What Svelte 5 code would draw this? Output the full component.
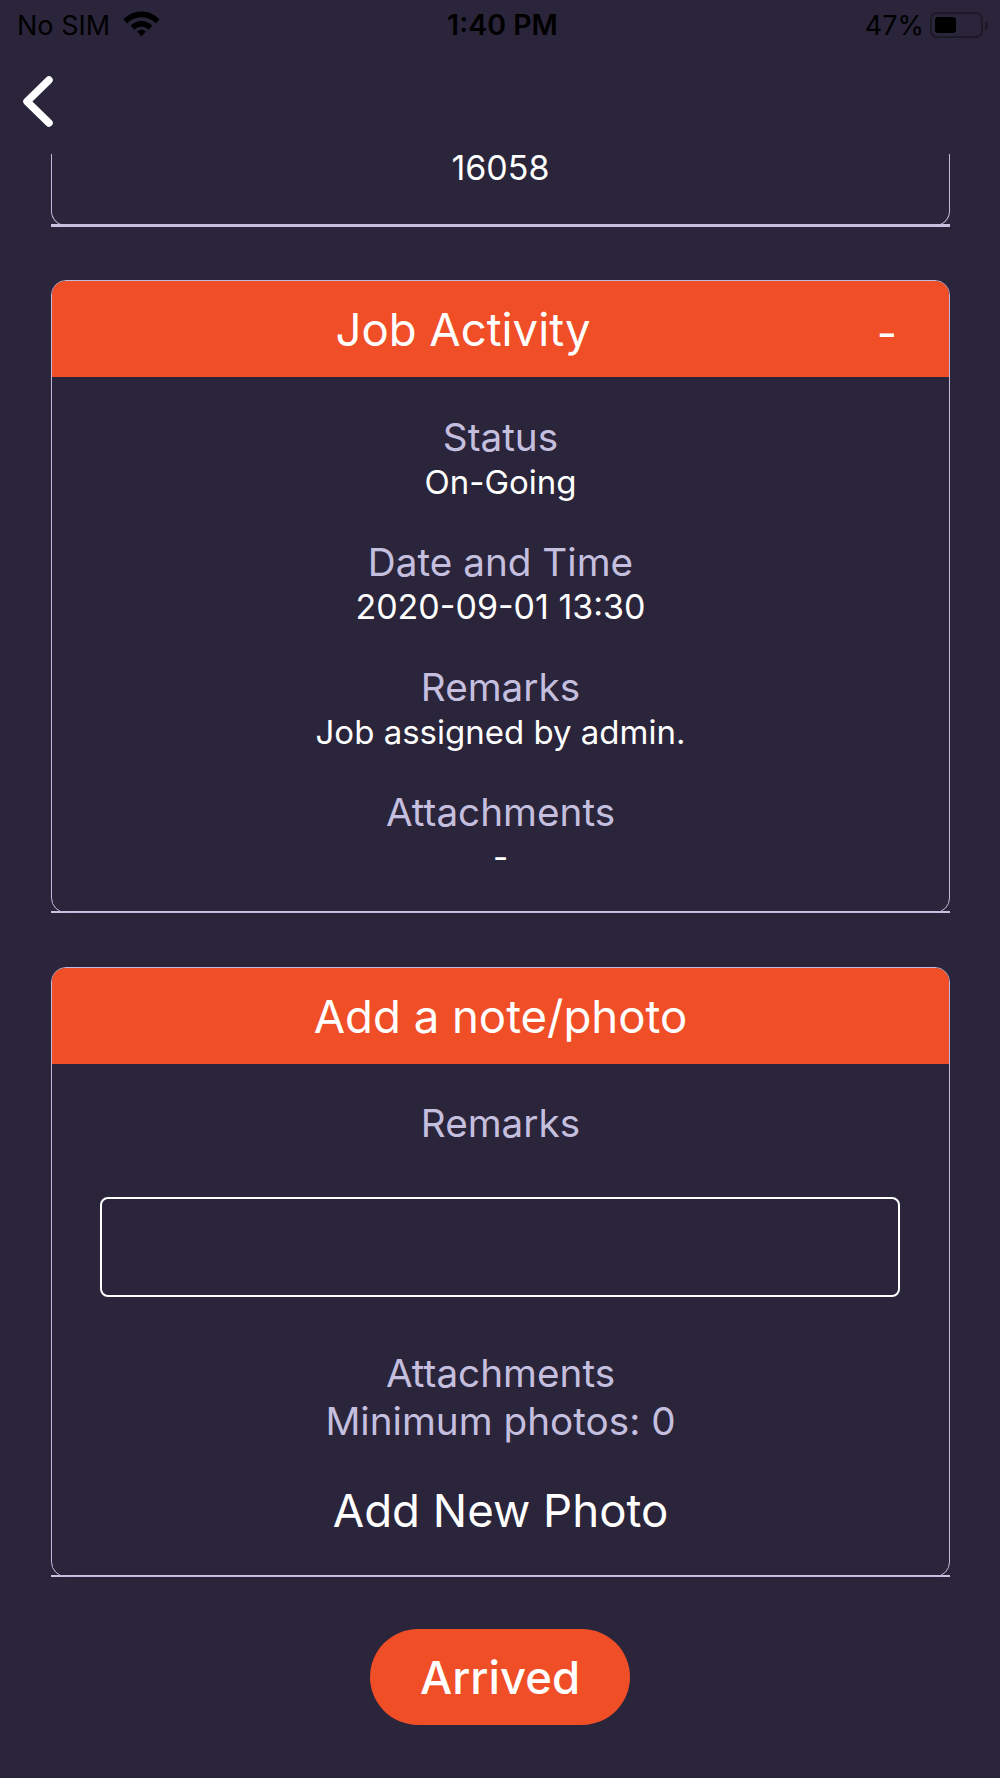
<script>
	const activity = [
		{ label: 'Status', value: 'On-Going' },
		{ label: 'Date and Time', value: '2020-09-01 13:30', numeric: true },
		{ label: 'Remarks', value: 'Job assigned by admin.' },
		{ label: 'Attachments', value: '-' }
	];
</script>

<div class="screen">
	<div class="status-bar">
		<div class="status-left">
			<span>No SIM</span>
			<svg class="wifi" width="37" height="26" viewBox="1 3.500 36 23.500" preserveAspectRatio="none" fill="#000">
				<path d="M19 4C12 4 6 6.600 1.500 11L5 14.800C8.700 11.300 13.600 9.200 19 9.200S29.300 11.300 33 14.800L36.500 11C32 6.600 26 4 19 4Z"/>
				<path d="M19 12.500C15 12.500 11.300 14 8.500 16.700L12 20.400C13.900 18.700 16.300 17.700 19 17.700S24.100 18.700 26 20.400L29.500 16.700C26.700 14 23 12.500 19 12.500Z"/>
				<path d="M19 20.500C17.400 20.500 16 21.100 14.900 22.100L19 26.500L23.100 22.100C22 21.100 20.600 20.500 19 20.500Z"/>
			</svg>
		</div>
		<span class="clock">1:40 PM</span>
		<div class="status-right">
			<span>47%</span>
			<div class="battery"><div class="battery-fill"></div></div>
			<div class="battery-cap"></div>
		</div>
	</div>

	<div class="nav">
		<button class="back" aria-label="Back">
			<svg width="34" height="52" viewBox="0 0 34 52" fill="none" stroke="#fff" stroke-width="7.500" stroke-linecap="round" stroke-linejoin="round">
				<path d="M29 4L7 25.500L29 47"/>
			</svg>
		</button>
	</div>

	<div class="content">
		<section class="card clipped">
			<div class="card-inner">
				<p class="value numeric">16058</p>
			</div>
		</section>

		<section class="card">
			<div class="card-inner">
				<header class="card-head with-toggle">
					<h2>Job Activity</h2>
					<span class="toggle">-</span>
				</header>
				<div class="fields">
					{#each activity as field}
						<div class="field">
							<div class="label">{field.label}</div>
							<div class="value" class:numeric={field.numeric}>{field.value}</div>
						</div>
					{/each}
				</div>
			</div>
		</section>

		<section class="card">
			<div class="card-inner">
				<header class="card-head">
					<h2>Add a note/photo</h2>
				</header>
				<div class="note">
					<div class="label">Remarks</div>
					<div class="note-input"></div>
					<div class="label">Attachments</div>
					<div class="label">Minimum photos: 0</div>
					<button class="add-photo">Add New Photo</button>
				</div>
			</div>
		</section>

		<button class="arrived">Arrived</button>
	</div>
</div>

<style>
	:global(body) {
		background: #2a253b;
	}

	.screen {
		width: 1000px;
		height: 1778px;
		overflow: hidden;
		display: flex;
		flex-direction: column;
		background: #2a253b;
		font-family: Inter, "Liberation Sans", sans-serif;
		color: #fff;
	}

	.status-bar {
		height: 50px;
		padding: 0 12px 0 17px;
		display: grid;
		grid-template-columns: 1fr auto 1fr;
		align-items: center;
		color: #000;
		font-size: 27px;
		line-height: 1;
	}

	.status-left {
		display: flex;
		align-items: center;
		gap: 13px;
	}

	.wifi {
		margin-top: -2px;
	}

	.clock {
		font-size: 28.500px;
		font-weight: 600;
	}

	.status-right {
		display: flex;
		align-items: center;
		justify-content: flex-end;
	}

	.battery {
		width: 53px;
		height: 26px;
		margin-left: 6px;
		padding: 3px;
		box-sizing: border-box;
		border: 2px solid #1d1a28;
		border-radius: 7px;
	}

	.battery-fill {
		width: 21px;
		height: 100%;
		background: #000;
		border-radius: 3px;
	}

	.battery-cap {
		width: 3px;
		height: 9px;
		margin-left: 2px;
		background: #1d1a28;
		border-radius: 0 3px 3px 0;
	}

	.nav {
		height: 104px;
		display: flex;
		align-items: flex-start;
	}

	.back {
		margin: 26px 0 0 20px;
		padding: 0;
		background: none;
		border: none;
		line-height: 0;
	}

	.content {
		display: flex;
		flex-direction: column;
		align-items: center;
		gap: 54px;
	}

	.card {
		width: 899px;
		box-sizing: border-box;
		border-bottom: 2px solid #c9c2e0;
		margin-left: 1px;
	}

	.card-inner {
		margin-bottom: -2px;
		border: 1.500px solid #c0bade;
		border-radius: 15px;
		overflow: hidden;
	}

	.clipped {
		border-bottom-width: 3px;
		margin-bottom: -1px;
	}

	.clipped .card-inner {
		display: flow-root;
		border-top: none;
		border-radius: 0 0 15px 15px;
		height: 72px;
		box-sizing: border-box;
		overflow: visible;
	}

	.clipped .value {
		margin: -7px 0 0;
	}

	.card-head {
		height: 96px;
		position: relative;
		display: flex;
		align-items: center;
		justify-content: center;
		background: #f04e27;
	}

	.with-toggle {
		padding-right: 75px;
	}

	h2 {
		margin: 0;
		font-size: 45.500px;
		font-weight: 400;
	}

	.toggle {
		position: absolute;
		right: 52px;
		top: 25px;
		font-size: 44px;
	}

	.fields {
		padding: 36px 0 34px;
		display: flex;
		flex-direction: column;
		gap: 35px;
	}

	.field,
	.note {
		text-align: center;
	}

	.label {
		font-size: 38.700px;
		line-height: 48px;
		color: #c5bfdf;
	}

	.value {
		font-size: 33px;
		line-height: 42px;
		color: #fff;
		text-align: center;
	}

	.value.numeric {
		font-size: 34px;
	}

	.note {
		padding-top: 35px;
	}

	.note-input {
		height: 100px;
		margin: 50px 49px 52px 48px;
		box-sizing: border-box;
		border: 2px solid #fff;
		border-radius: 8px;
	}

	.add-photo {
		display: block;
		width: 100%;
		margin: 36px 0 0;
		padding: 0 0 35px;
		background: none;
		border: none;
		color: #fff;
		font-family: inherit;
		font-size: 45.600px;
		line-height: 60px;
	}

	.arrived {
		width: 260px;
		height: 96px;
		margin-top: -2px;
		border: none;
		border-radius: 48px;
		background: #f04e27;
		color: #fff;
		font-family: inherit;
		font-size: 45.500px;
		font-weight: 500;
	}
</style>
